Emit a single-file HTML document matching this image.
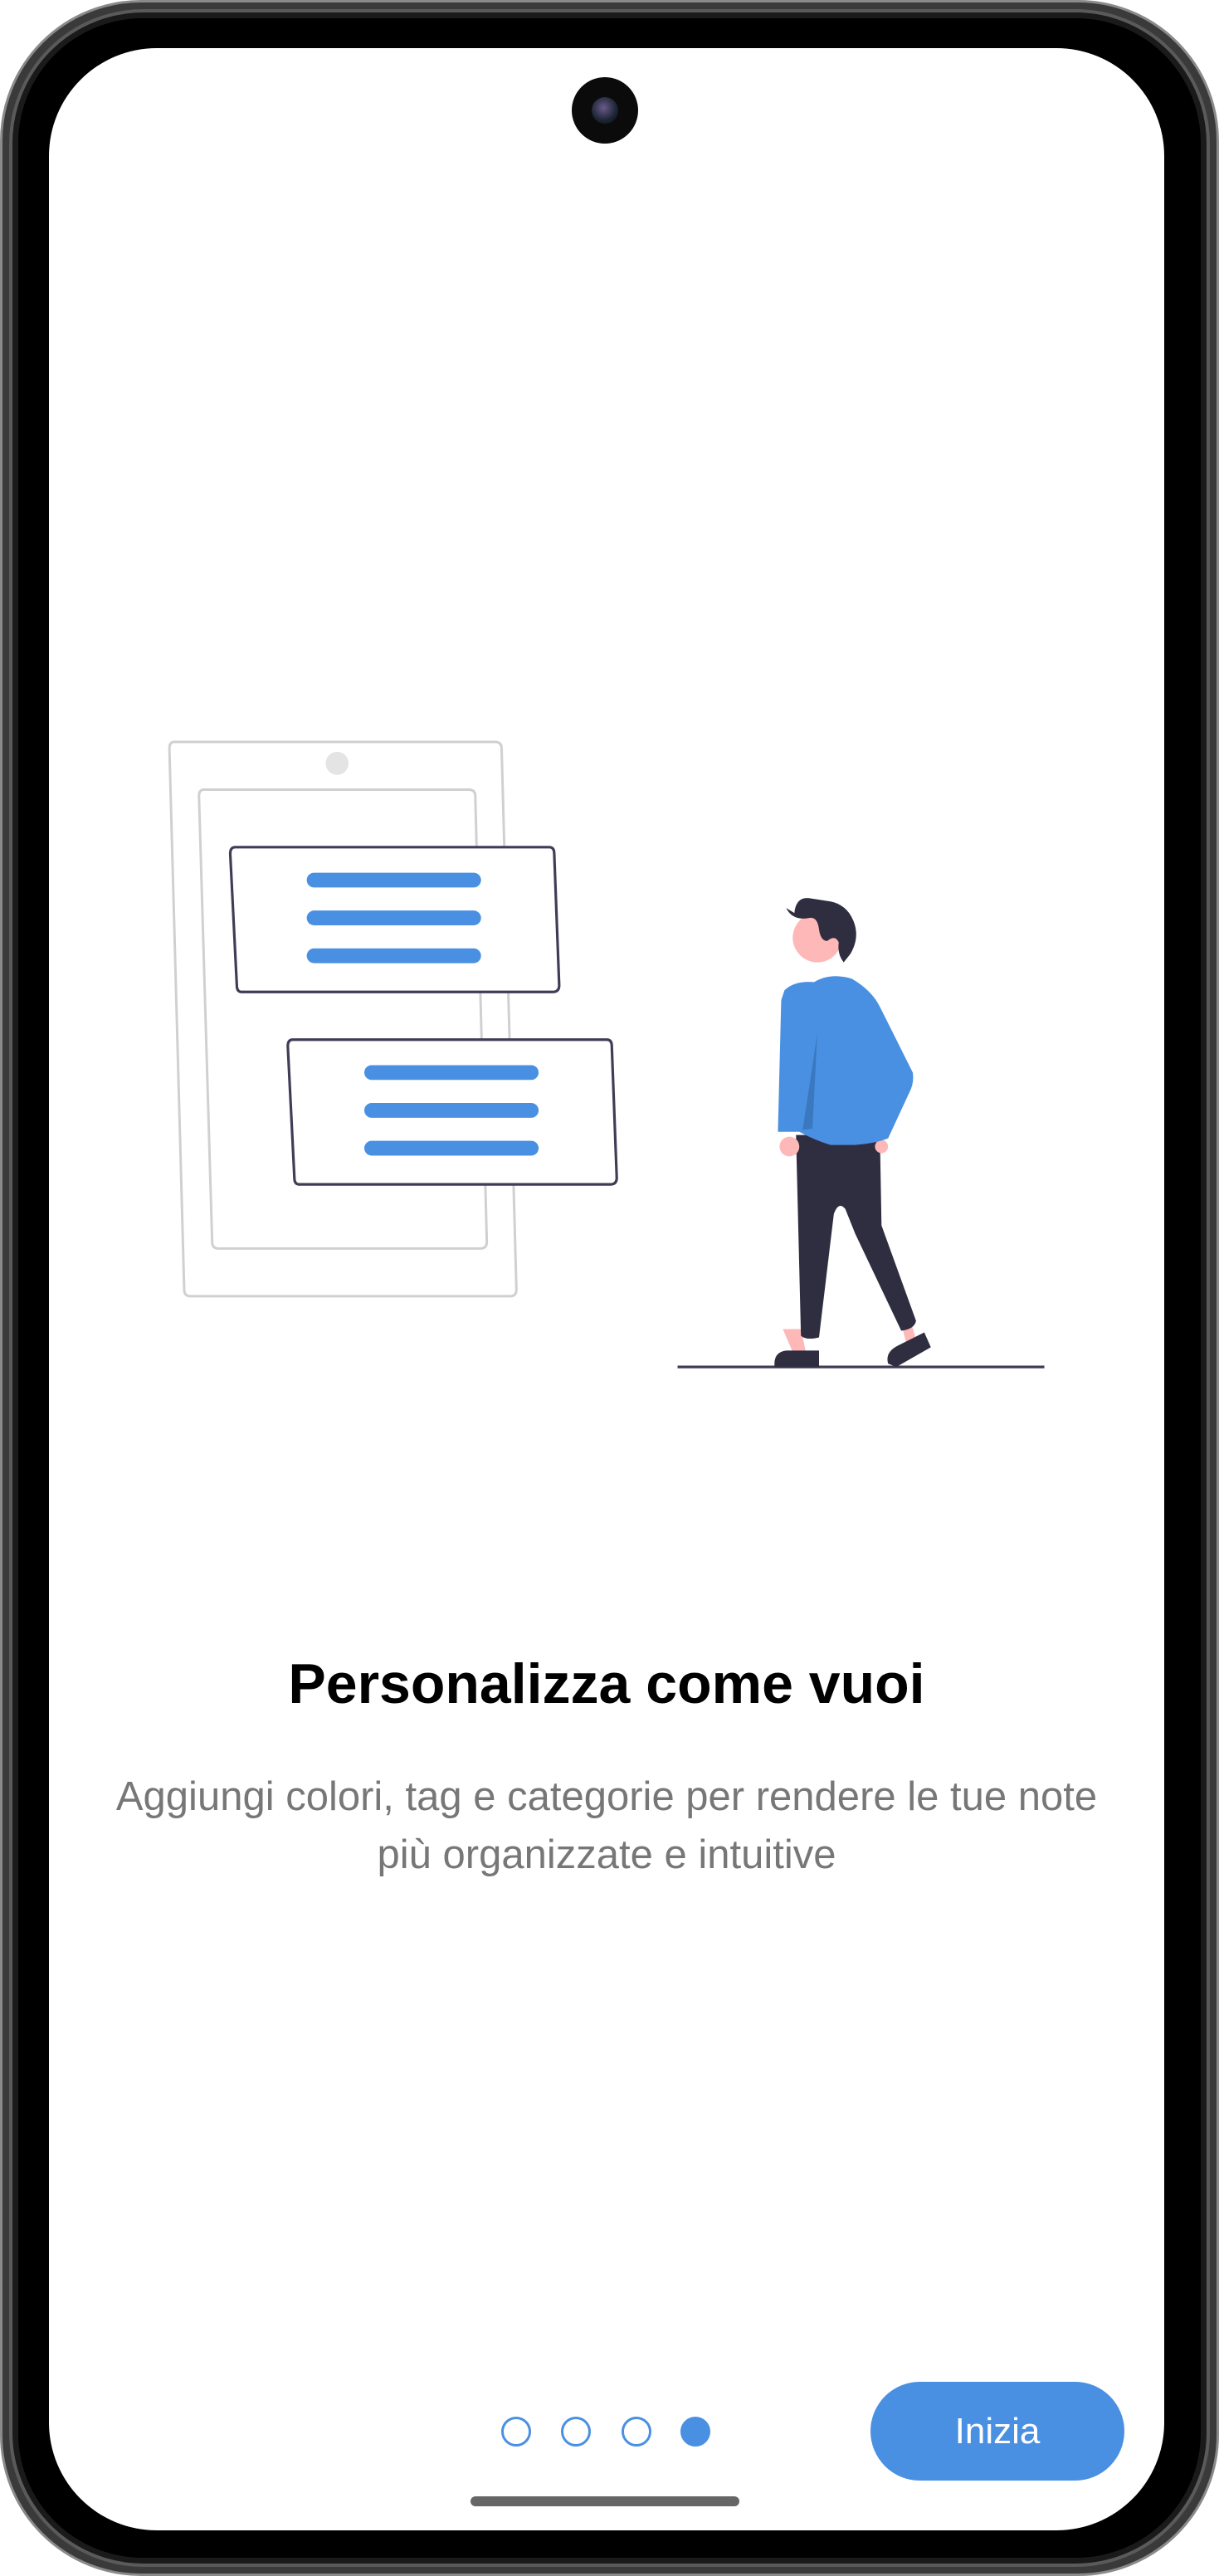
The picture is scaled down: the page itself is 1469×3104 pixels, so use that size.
<!DOCTYPE html>
<html><head><meta charset="utf-8"><style>
html,body{margin:0;padding:0;background:#fff;}
body{width:1469px;height:3104px;position:relative;overflow:hidden;font-family:"Liberation Sans",sans-serif;}
.rim{position:absolute;left:0;top:0;width:1469px;height:3104px;box-sizing:border-box;border-radius:170px;background:#3a3a3a;border:3px solid #8a8a8a;}
.rim2{position:absolute;left:8px;top:8px;right:8px;bottom:8px;border-radius:162px;background:#1a1a1a;border:4px solid #5a5a5a;}
.body{position:absolute;left:22px;top:22px;right:22px;bottom:22px;border-radius:150px;background:#000;}
.screen{position:absolute;left:59px;top:58px;width:1344px;height:2991px;border-radius:130px;background:#fff;}
.cam{position:absolute;left:689px;top:93px;width:80px;height:80px;border-radius:50%;background:#0b0b0b;}
.cam i{position:absolute;left:24px;top:24px;width:32px;height:32px;border-radius:50%;background:radial-gradient(circle at 45% 40%,#6a5a8a,#1b2433 60%,#111);}
h1{position:absolute;left:0;width:1462px;top:1990px;margin:0;text-align:center;font-size:68px;font-weight:bold;color:#000;}
p.sub{position:absolute;left:20px;width:1422px;top:2130px;margin:0;text-align:center;font-size:49px;line-height:70px;color:#777;}
.dot{position:absolute;top:2912px;width:36px;height:36px;border-radius:50%;border:3px solid #4a90e2;box-sizing:border-box;}
.btn{position:absolute;left:1049px;top:2870px;width:306px;height:119px;border-radius:60px;background:#4a90e2;color:#fff;font-size:44px;text-align:center;line-height:119px;}
.home{position:absolute;left:567px;top:3008px;width:324px;height:12px;border-radius:6px;background:#666;}
</style></head><body>
<div class="rim"><div class="rim2"></div></div>
<div class="body"></div>
<div class="screen"></div>
<div class="cam"><i></i></div>
<svg style="position:absolute;left:0;top:0" width="1469" height="3104" viewBox="0 0 741.2 1566">
<g fill="none" stroke="#d0d0d0" stroke-width="1.5">
<path d="M106 451 H301 Q305 451 305 455 L314 784 Q314 788 310 788 H116 Q112 788 112 784 L103 455 Q103 451 106 451Z"/>
<path d="M124 480 H285 Q289 480 289 484 L296 755 Q296 759 292 759 H133 Q129 759 129 755 L121 484 Q121 480 124 480Z"/>
</g>
<circle cx="205" cy="464" r="7" fill="#e4e4e4"/>
<g fill="#fff" stroke="#3f3d56" stroke-width="1.6">
<path d="M143 515 H334 Q337 515 337 519 L340 599 Q340 603 336 603 H147 Q144 603 144 599 L140 519 Q140 515 143 515Z"/>
<path d="M178 632 H369 Q372 632 372 636 L375 716 Q375 720 371 720 H182 Q179 720 179 716 L175 636 Q175 632 178 632Z"/>
</g>
<g stroke="#4a90e2" stroke-width="9" stroke-linecap="round">
<path d="M191 535 H288 M191 558 H288 M191 581 H288"/>
<path d="M226 652 H323 M226 675 H323 M226 698 H323"/>
</g>
<line x1="412" y1="831" x2="635" y2="831" stroke="#3f3d56" stroke-width="1.6"/>
<circle cx="497" cy="570" r="15" fill="#ffb8b8"/>
<path d="M478 552 L483 555 Q484 545 492 546 L505 548 Q515 550 519 560 Q523 570 517 580 L513 585 Q509 580 510 573 Q508 568 503 572 Q499 572 498 565 Q497 557 492 558 Q482 560 478 552Z" fill="#2f2e41"/>
<path d="M476 808 L482 822 L490 822 L487 808Z M548 805 L552 820 L558 818 L554 804Z" fill="#ffb8b8"/>
<path d="M484 690 L535 690 L536 745 L557 803 Q556 808 548 809 L520 750 L514 735 Q510 730 507 738 L498 813 Q490 815 487 812Z" fill="#2f2e41"/>
<path d="M471 831 Q470 822 478 821 H498 V831Z M540 829 Q538 822 546 818 L562 810 L566 819 L545 831Z" fill="#2f2e41"/>
<circle cx="480" cy="697" r="6" fill="#ffb8b8"/>
<circle cx="536" cy="697" r="4" fill="#ffb8b8"/>
<path d="M477 602 Q483 596 495 597 Q505 591 518 595 Q530 602 535 612 L555 652 Q556 658 553 664 L540 692 Q533 695 520 696 L505 696 Q495 693 486 688 L473 688 L475 608Z" fill="#4a90e2"/>
<path d="M497 628 L494 686 L488 687 Z" fill="#3a78c0"/>
</svg>
<h1>Personalizza come vuoi</h1>
<p class="sub">Aggiungi colori, tag e categorie per rendere le tue note<br>più organizzate e intuitive</p>
<div class="dot" style="left:604px"></div>
<div class="dot" style="left:676px"></div>
<div class="dot" style="left:749px"></div>
<div class="dot" style="left:820px;background:#4a90e2"></div>
<div class="btn">Inizia</div>
<div class="home"></div>
</body></html>
